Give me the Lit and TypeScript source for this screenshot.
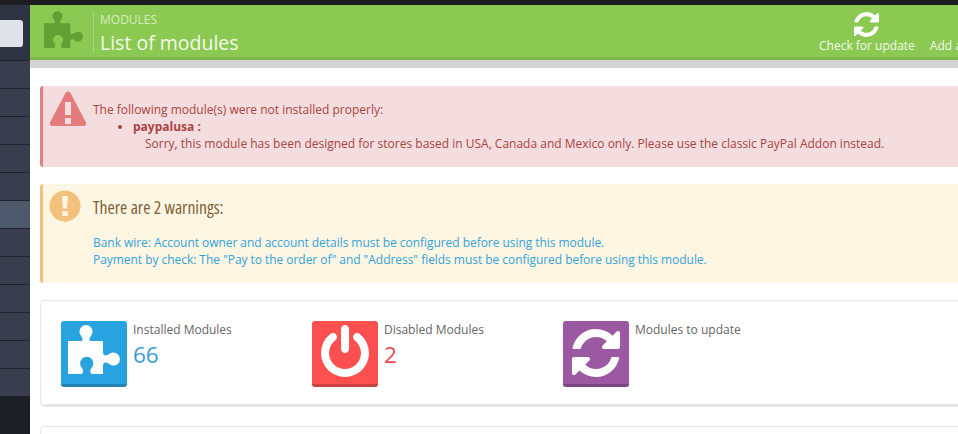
import { LitElement, html, css } from "lit";
import { customElement } from "lit/decorators.js";

const REFRESH = "M1639 1056q0 5-1 7-64 268-268 434.5t-478 166.5q-146 0-282.5-55t-243.5-157l-129 129q-19 19-45 19t-45-19-19-45v-448q0-26 19-45t45-19h448q26 0 45 19t19 45-19 45l-137 137q71 66 161 102t187 36q134 0 250-65t186-179q11-17 53-117 8-23 30-23h192q13 0 22.5 9.5t9.5 22.5zm25-800v448q0 26-19 45t-45 19h-448q-26 0-45-19t-19-45 19-45l138-138q-148-137-349-137-134 0-250 65t-186 179q-11 17-53 117-8 23-30 23h-199q-13 0-22.5-9.5t-9.5-22.5v-7q65-268 270-434.5t480-166.5q146 0 284 55.5t245 156.5l130-129q19-19 45-19t45 19 19 45z";
const POWER = "M1664 896q0 156-61 298t-164 245-245 164-298 61-298-61-245-164-164-245-61-298q0-182 80.5-343t226.5-270q43-32 95.5-25t83.5 50q32 42 24.5 94.5t-49.5 84.5q-98 74-151.5 181t-53.5 228q0 104 40.5 198.5t109.5 163.5 163.5 109.5 198.5 40.5 198.5-40.5 163.5-109.5 109.5-163.5 40.5-198.5q0-121-53.5-228t-151.5-181q-42-32-49.5-84.5t24.5-94.5q31-43 84-50t95 25q146 109 226.5 270t80.5 343zm-640-768v640q0 52-38 90t-90 38-90-38-38-90v-640q0-52 38-90t90-38 90 38 38 90z";
const PUZZLE = "M7 20H19.500C22 20 22 18 20.500 15.500A6.600 6.600 0 1 1 29.500 15.500C28 18 28 20 30.500 20H42V31C42 35 45 35 47.500 33.500A6.600 6.600 0 1 1 47.500 42.500C45 41 42 41 42 45V53H31.500C29 53 29 50 30.200 47.300A6.600 6.600 0 1 0 21.200 47.300C22.500 50 22.500 53 20 53H7Z";

@customElement("app-root")
export class AppRoot extends LitElement {
  static styles = css`
    :host { display: block; width: 958px; height: 434px; overflow: hidden; background: #fff; font-family: "Open Sans", sans-serif; font-size: 12px; line-height: 17px; }
    .top { height: 5px; background: #1d1d1f; }
    .layout { display: flex; height: 429px; }
    .side { width: 30px; flex: none; background: #1b1e24; display: flex; flex-direction: column; }
    .side-head { height: 55px; background: #2e3441; border-bottom: 1px solid #1f232c; display: flex; flex-direction: column; justify-content: flex-start; }
    .search { margin-top: 15px; height: 27px; width: 23px; background: #dfe2e9; border-radius: 0 3px 3px 0; }
    .item { height: 27px; background: #383e4d; border-bottom: 1px solid #1f232c; }
    .item.active { background: #4d586b; }
    .main { flex: 1; min-width: 0; overflow: hidden; }
    .head { height: 52px; background: #8bc953; border-bottom: 3px solid #7cb54a; display: flex; align-items: stretch; }
    .logo { width: 39px; height: 37px; margin: 6px 10px 0 14px; flex: none; }
    .titles { border-left: 1px solid #a5d67d; margin: 7px 0 4px 0; padding: 1px 0 0 6px; flex: none; width: 400px; color: #fff; }
    .crumb { font-size: 12px; line-height: 14px; color: #d6eebf; }
    .title { font-size: 19.500px; line-height: 26px; margin-top: 3px; color: #f2faea; }
    .actions { margin-left: auto; display: flex; gap: 15px; color: #f2faea; width: 139px; flex: none; overflow: hidden; white-space: nowrap; }
    .action { display: flex; flex-direction: column; align-items: center; flex: none; }
    .action svg { width: 25px; height: 25px; margin-top: 7px; fill: #fff; }
    .action span { font-size: 12px; line-height: 14px; margin-top: 2px; }
    .strip { height: 8px; background: #d4d4d4; }
    .content { padding: 18px 0 0 10px; }
    .alert { display: flex; border-left: 3px solid; border-radius: 3px 0 0 3px; }
    .danger { background: #f3dddf; border-color: #e08081; color: #a94442; height: 81px; }
    .warn { background: #fdf6e3; border-color: #f3c17b; height: 99px; margin-top: 17px; }
    .a-icon { width: 50px; flex: none; }
    .a-icon svg { display: block; }
    .danger .a-icon svg { margin: 5px 0 0 6px; }
    .warn .a-icon svg { margin: 6px 0 0 6px; }
    .a-body { padding-top: 15px; white-space: nowrap; font-size: 12px; line-height: 17px; }
    .danger .name { font-weight: 700; }
    .list { margin: 0; padding: 0 0 0 40px; list-style: disc; }
    .list p { margin: 0 0 0 12px; }
    .warn .a-body { padding-top: 11px; }
    .warn h4 { margin: 0 0 15px; font-family: "Open Sans", sans-serif; font-weight: 400; font-size: 17.600px; line-height: 24px; font-stretch: 75%; color: #7d6338; }
    .warn .msg { color: #34a3d8; letter-spacing: -0.045px; }
    .card { margin-top: 17px; border: 1px solid #e6e6e6; border-bottom-width: 3px; border-right: 0; border-radius: 5px 0 0 5px; display: grid; grid-template-columns: repeat(3, 251px); padding: 20px 0 0 20px; height: 83px; }
    .stat { display: flex; gap: 6px; align-items: flex-start; }
    .tile { width: 66px; height: 63px; border-bottom: 3px solid; border-radius: 3px; flex: none; display: flex; align-items: center; justify-content: center; }
    .tile svg { display: block; fill: #fff; }
    .blue { background: #29a3e0; border-color: #2582b3; }
    .red { background: #fc4f4f; border-color: #ca4040; }
    .purple { background: #9b59a1; border-color: #7c4781; }
    .label { color: #666; font-size: 12px; line-height: 17px; }
    .num { font-size: 22.500px; line-height: 33px; }
    .num.b { color: #3a9ad0; }
    .num.r { color: #ec4a4a; }
    .card2 { margin-top: 19px; height: 30px; border: 1px solid #e6e6e6; border-right: 0; border-radius: 5px 0 0 0; }
  `;

  render() {
    const items = [0, 1, 2, 3, 4, 5, 6, 7, 8, 9, 10, 11];
    return html`
      <div class="top"></div>
      <div class="layout">
        <nav class="side">
          <div class="side-head"><div class="search"></div></div>
          ${items.map((i) => html`<div class="item ${i === 5 ? "active" : ""}"></div>`)}
        </nav>
        <div class="main">
          <header class="head">
            <svg class="logo" viewBox="7 4 52 49"><path d=${PUZZLE} fill="#639f32"></path></svg>
            <div class="titles">
              <div class="crumb">MODULES</div>
              <div class="title">List of modules</div>
            </div>
            <div class="actions">
              <div class="action"><svg viewBox="128 128 1536 1536"><path d=${REFRESH}></path></svg><span>Check for update</span></div>
              <div class="action"><svg viewBox="0 0 26 26"></svg><span>Add a module</span></div>
            </div>
          </header>
          <div class="strip"></div>
          <div class="content">
            <section class="alert danger">
              <div class="a-icon">
                <svg width="38" height="36" viewBox="0 0 38 36">
                  <path d="M19 0.500C20 0.500 21 1.200 21.500 2L36.800 31C37.800 33 37 35 34.600 35H3.400C1 35 0.200 33 1.200 31L16.500 2C17 1.200 18 0.500 19 0.500Z" fill="#e47b7c"></path>
                  <path d="M16 11H22V24H16ZM16 27H22V33H16Z" fill="#f3dddf"></path>
                </svg>
              </div>
              <div class="a-body">
                The following module(s) were not installed properly:
                <ul class="list"><li><span class="name">paypalusa :</span><p>Sorry, this module has been designed for stores based in USA, Canada and Mexico only. Please use the classic PayPal Addon instead.</p></li></ul>
              </div>
            </section>
            <section class="alert warn">
              <div class="a-icon">
                <svg width="32" height="33" viewBox="0 0 32 33">
                  <circle cx="16" cy="16" r="15.500" fill="#f3c17b"></circle>
                  <path d="M14 30H18L16 33Z" fill="#f3c17b"></path>
                  <path d="M13 6H19L18 18.500H14ZM13.300 21H18.700V26H13.300Z" fill="#fdf6e3"></path>
                </svg>
              </div>
              <div class="a-body">
                <h4>There are 2 warnings:</h4>
                <div class="msg">Bank wire: Account owner and account details must be configured before using this module.</div>
                <div class="msg">Payment by check: The "Pay to the order of" and "Address" fields must be configured before using this module.</div>
              </div>
            </section>
            <section class="card">
              <div class="stat">
                <div class="tile blue"><svg width="66" height="63" viewBox="0 0 66 63"><path d=${PUZZLE}></path></svg></div>
                <div><div class="label">Installed Modules</div><div class="num b">66</div></div>
              </div>
              <div class="stat">
                <div class="tile red"><svg width="56" height="56" viewBox="0 0 1792 1792"><path d=${POWER}></path></svg></div>
                <div><div class="label">Disabled Modules</div><div class="num r">2</div></div>
              </div>
              <div class="stat">
                <div class="tile purple"><svg width="48" height="48" viewBox="128 128 1536 1536"><path d=${REFRESH}></path></svg></div>
                <div><div class="label">Modules to update</div></div>
              </div>
            </section>
            <div class="card2"></div>
          </div>
        </div>
      </div>
    `;
  }
}
